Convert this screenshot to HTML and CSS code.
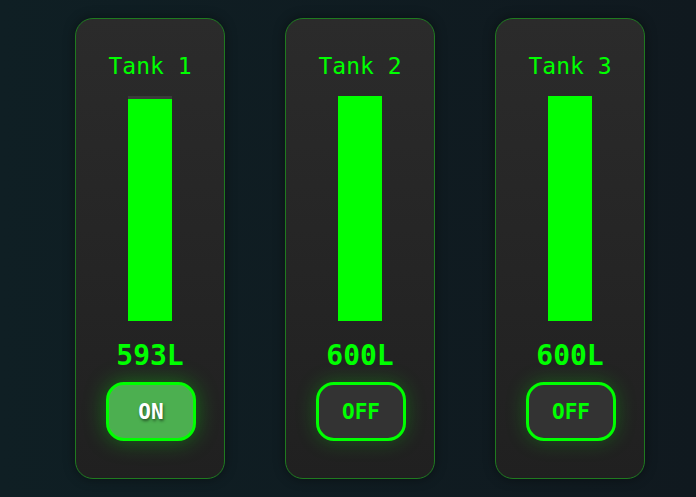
FILE: index.html
```html
<!DOCTYPE html>
<html lang="en">
<head>
    <meta charset="UTF-8">
    <title>Water Tanks</title>
    <link rel="stylesheet" href="styles.css">
</head>
<body>
    <div class="tanks">
        <div class="tank-card">
            <h3 class="tank-title">Tank 1</h3>
            <div class="tank-bar">
                <div class="tank-fill" style="height: 98.8%"></div>
            </div>
            <div class="tank-value">593L</div>
            <button class="pump-btn on">ON</button>
        </div>
        <div class="tank-card">
            <h3 class="tank-title">Tank 2</h3>
            <div class="tank-bar">
                <div class="tank-fill" style="height: 100%"></div>
            </div>
            <div class="tank-value">600L</div>
            <button class="pump-btn">OFF</button>
        </div>
        <div class="tank-card">
            <h3 class="tank-title">Tank 3</h3>
            <div class="tank-bar">
                <div class="tank-fill" style="height: 100%"></div>
            </div>
            <div class="tank-value">600L</div>
            <button class="pump-btn">OFF</button>
        </div>
    </div>
</body>
</html>
```

FILE: styles.css
```css
body {
    margin: 0;
    height: 497px;
    font-family: "DejaVu Sans Mono", monospace;
    background: linear-gradient(90deg, #0f1f24, #10191f);
    color: #00ff00;
}
.tanks {
    display: flex;
    justify-content: center;
    gap: 60px;
    padding: 18px 0 0 24px;
}
.tank-card {
    width: 150px;
    height: 461px;
    box-sizing: border-box;
    border: 1px solid #1f7a1f;
    border-radius: 18px;
    background: linear-gradient(180deg, #2b2b2b, #202020);
    box-shadow: 0 0 12px rgba(0,0,0,.4);
    display: flex;
    flex-direction: column;
    align-items: center;
    padding-top: 33px;
}
.tank-title {
    margin: 0;
    font-size: 23px;
    font-weight: normal;
    line-height: 28px;
}
.tank-bar {
    margin-top: 16px;
    width: 44px;
    height: 225px;
    background: #3a3a3a;
    display: flex;
    align-items: flex-end;
}
.tank-fill {
    width: 100%;
    background: #00ff00;
}
.tank-value {
    margin-top: 19px;
    font-size: 28px;
    font-weight: bold;
    line-height: 32px;
}
.pump-btn {
    margin-top: 10px;
    margin-left: 2px;
    width: 90px;
    height: 59px;
    border: 3px solid #00ff00;
    border-radius: 18px;
    background: #333;
    color: #00ff00;
    font-family: "DejaVu Sans Mono", monospace;
    font-size: 21px;
    font-weight: bold;
    box-shadow: 0 0 20px rgba(0,255,0,.25);
    cursor: pointer;
}
.pump-btn.on {
    background: #4caf50;
    color: #fff;
    text-shadow: 1px 2px 3px rgba(0,0,0,.5);
    box-shadow: 0 0 22px rgba(0,255,0,.35);
}
```
